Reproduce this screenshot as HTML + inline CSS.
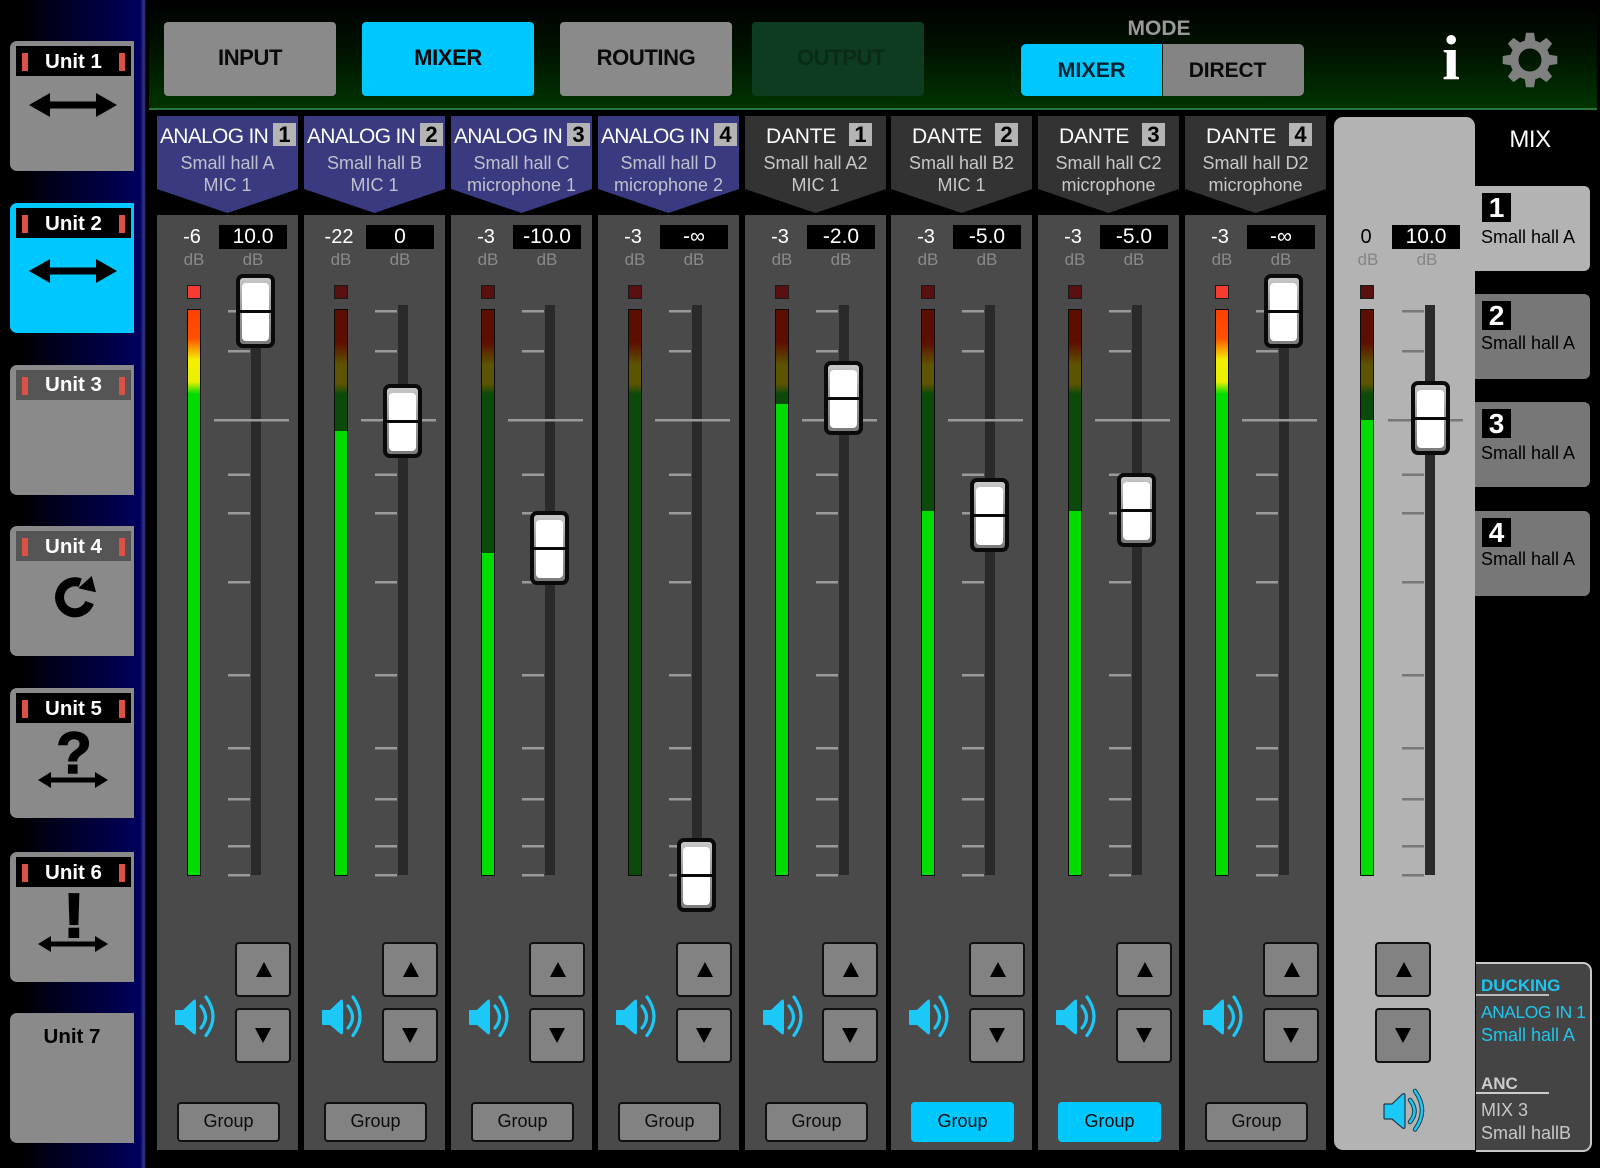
<!DOCTYPE html>
<html><head><meta charset="utf-8"><title>Mixer</title>
<style>
html,body{margin:0;padding:0;background:#000;width:1600px;height:1168px;overflow:hidden}
body{position:relative;font-family:"Liberation Sans",sans-serif}
div,span,svg{position:absolute;display:block}
.c{text-align:center;white-space:nowrap}
#side{left:0;top:0;width:146px;height:1168px;background:linear-gradient(90deg,#000 0,#000 20px,#00002a 70px,#000052 125px,#000060 140px,#34348c 144px,#20205a 145px,#000 146px)}
.u{left:10px;width:124px;height:130px;background:#8a8a8a;border-radius:7px 0 0 7px}
.u.on{background:#00c8ff}
.ub{left:6px;top:5px;width:115px;height:30px;background:#000}
.ub i{position:absolute;top:7px;width:6px;height:18px;background:#dc5045;display:block}
.ub i.a{left:6px}.ub i.z{left:103px}
.ut{left:0;width:115px;top:4px;line-height:24px;font-size:20.5px;font-weight:bold;color:#fff;text-align:center}
#top{left:149px;top:0;width:1448px;height:108px;background:linear-gradient(180deg,#000 0,#001200 45%,#003400 100%);border-bottom:2px solid #26743e}
.tb{top:22px;width:172px;height:74px;line-height:72px;border-radius:4px;background:#8a8a8a;text-align:center;font-size:22px;font-weight:bold;letter-spacing:-.4px;color:#0a0a0a}
.s{top:0;width:141px;height:1168px}
.h{left:0;top:116px;width:141px;height:97px;clip-path:polygon(0 0,100% 0,100% 73px,50% 100%,0 73px);background:#333}
.h.a{background:#3a3a80}
.ht{top:8px;line-height:26px;font-size:21px;color:#fff;white-space:nowrap;letter-spacing:-.7px}
.a .ht{left:3px}
.d .ht{left:21px;letter-spacing:-.2px}
.n{top:7px;width:23px;height:23px;line-height:24px;background:#b4b4b4;text-align:center;font-size:22px;font-weight:bold;color:#000}
.a .n{left:116px}.d .n{left:104px}
.l1,.l2{left:0;width:141px;text-align:center;font-size:18px;color:#c0c0cc;line-height:22px;white-space:nowrap}
.l1{top:36px}.l2{top:58px}
.d .l1,.d .l2{color:#c8c8c8}
.b{left:0;top:215px;width:141px;height:935px;background:#4a4a4a}
.lv{left:10px;width:50px;top:225px;line-height:24px;font-size:20px;color:#fff;text-align:center}
.vb{left:62px;top:225px;width:68px;height:24px;line-height:24px;background:#000;color:#fff;font-size:21px;text-align:center}
.db{top:250px;width:40px;line-height:20px;font-size:17px;color:#8a8a8a;text-align:center}
.led{left:30px;top:285px;width:12px;height:12px;border:1px solid #1a1a1a;background:#5a1010}
.led.on{background:#f63c30}
.m{left:30px;top:309px;width:12px;height:565px;border:1px solid #0c0c0c;background:linear-gradient(180deg,#5c0f00 0,#5c0f00 32px,#5c5400 55px,#5c5400 74px,#0b4a0b 84px,#0b4a0b 100%)}
.m b{position:absolute;display:block;left:0;top:0;width:12px;height:565px;background:linear-gradient(180deg,#ff4000 0,#ff5000 28px,#f4f000 50px,#e8f000 72px,#00dc00 84px,#00dc00 100%)}
.tr{left:94px;top:305px;width:10px;height:570px;background:#2a2a2a}
.tk{left:57px;top:0;color:#9a9a9a;overflow:visible}
.cap{left:79px;width:31px;height:66px;border:4px solid #0a0a0a;border-radius:7px;background:linear-gradient(180deg,#c8c8c8 0,#a0a0a0 40%,#7c7c7c 100%)}
.cap:before{content:"";position:absolute;left:2px;right:2px;top:5px;bottom:3px;background:#fff;border-radius:4px}
.cap:after{content:"";position:absolute;left:0;right:0;top:32px;height:3px;background:#0a0a0a}
.ud{left:78px;width:52px;height:51px;background:#828282;border:2px solid #111;border-radius:4px}
.up{top:942px}.dn{top:1008px}
.ud svg{left:0;top:0}
.sp{left:18px;top:998px;overflow:visible}
.g{left:20px;top:1102px;width:99px;height:36px;line-height:35px;border:2px solid #111;border-radius:4px;background:#828282;text-align:center;font-size:18px;color:#0c0c0c}
.g.on{background:#00c8ff;border-color:#00c8ff}
.mt{left:1475px;width:115px;height:85px;background:#777;border-radius:0 6px 6px 0}
.mt.on{background:#b3b3b3}
.mn{left:7px;top:7px;width:29px;height:29px;line-height:30px;background:#000;color:#fff;font-weight:bold;font-size:28px;text-align:center}
.ml{left:6px;top:40px;font-size:18px;line-height:22px;color:#000;white-space:nowrap}
#duck div{left:5px;white-space:nowrap;font-size:18px;line-height:22px}
</style></head>
<body>
<svg width="0" height="0" style="left:0;top:0"><defs>
<g id="ticks" fill="currentColor">
<rect x="14" y="310" width="22" height="2.5"/><rect x="14" y="350" width="22" height="2.5"/><rect x="0" y="419" width="75" height="2.5"/><rect x="14" y="473.500" width="22" height="2.500"/><rect x="14" y="512" width="22" height="2.500"/><rect x="14" y="581" width="22" height="2.500"/><rect x="14" y="674" width="22" height="2.500"/><rect x="14" y="747" width="22" height="2.500"/><rect x="14" y="798" width="22" height="2.500"/><rect x="14" y="845" width="22" height="2.500"/><rect x="14" y="874" width="22" height="2.500"/>
</g>
<g id="spk"><path d="M1 12H8L18 2.500Q21 0 21 4V34Q21 38 18 35.500L8 27H1Q0 27 0 26V13Q0 12 1 12Z" fill="#1cc8f6"/><path d="M26 8Q35 19.500 26 30M31 -1Q45 18.500 31 37.500" fill="none" stroke="#1cc8f6" stroke-width="3.200" stroke-linecap="round"/></g>
<g id="arw"><path d="M0 12L21 0V8.500H67V0L88 12L67 24V15.500H21V24Z" fill="#000"/></g>
<g id="arws"><path d="M0 8L13 0V5.500H57V0L70 8L57 16V10.500H13V16Z" fill="#000"/></g>
<g id="tu"><path d="M8 0L16 15H0Z" fill="#000"/></g>
<g id="td"><path d="M0 0H16L8 15Z" fill="#000"/></g>
</defs></svg>

<div id="side"></div>
<div class="u" style="top:41px"><div class="ub"><i class="a"></i><i class="z"></i><div class="ut">Unit 1</div></div><svg style="left:19px;top:52px" width="88" height="24"><use href="#arw"/></svg></div>
<div class="u on" style="top:203px"><div class="ub"><i class="a"></i><i class="z"></i><div class="ut">Unit 2</div></div><svg style="left:19px;top:56px" width="88" height="24"><use href="#arw"/></svg></div>
<div class="u" style="top:365px"><div class="ub" style="background:#555"><i class="a"></i><i class="z"></i><div class="ut" style="top:3px">Unit 3</div></div></div>
<div class="u" style="top:526px"><div class="ub" style="background:#555"><i class="a"></i><i class="z"></i><div class="ut">Unit 4</div></div><svg style="left:40px;top:40px" width="60" height="60" viewBox="50 566 60 60"><path d="M89.600 602.600A15.500 15.500 0 1 1 80.300 582.700" fill="none" stroke="#000" stroke-width="9"/><path d="M91.700 576L96 592.300L78.300 588.300Z" fill="#000"/></svg></div>
<div class="u" style="top:688px"><div class="ub"><i class="a"></i><i class="z"></i><div class="ut">Unit 5</div></div><div class="c" style="left:24px;width:80px;top:36px;line-height:60px;font-size:58px;font-weight:bold;color:#000;-webkit-text-stroke:1.5px #000">?</div><svg style="left:28px;top:84px" width="70" height="16"><use href="#arws"/></svg></div>
<div class="u" style="top:852px"><div class="ub"><i class="a"></i><i class="z"></i><div class="ut">Unit 6</div></div><div class="c" style="left:24px;width:80px;top:35px;line-height:60px;font-size:62px;font-weight:bold;color:#000;-webkit-text-stroke:2px #000">!</div><svg style="left:28px;top:84px" width="70" height="16"><use href="#arws"/></svg></div>
<div class="u" style="top:1013px"><div class="ut" style="top:12px;width:124px;color:#000">Unit 7</div></div>

<div id="top"></div>
<div class="tb" style="left:164px">INPUT</div>
<div class="tb" style="left:362px;background:#00c8ff">MIXER</div>
<div class="tb" style="left:560px">ROUTING</div>
<div class="tb" style="left:752px;width:166px;padding-left:6px;background:#0d3c20;color:#0a2c14">OUTPUT</div>
<div class="c" style="left:1100px;width:118px;top:16px;line-height:25px;font-size:21px;font-weight:bold;color:#999">MODE</div>
<div class="c" style="left:1021px;top:44px;width:141px;height:52px;line-height:53px;background:#00c8ff;border-radius:5px 0 0 5px;font-size:21.500px;font-weight:bold;color:#03222e">MIXER</div>
<div class="c" style="left:1163px;top:44px;width:129px;padding-right:12px;height:52px;line-height:53px;background:#848484;border-radius:0 5px 5px 0;font-size:21px;font-weight:bold;color:#0a0a0a;letter-spacing:-.1px">DIRECT</div>
<div class="c" style="left:1421px;width:60px;top:22px;line-height:72px;font-family:'Liberation Serif',serif;font-size:64px;font-weight:bold;color:#fff">i</div>
<svg style="left:1500px;top:30px" width="60" height="60" viewBox="-30 -30 60 60"><circle r="15.750" fill="none" stroke="#808080" stroke-width="8.500"/><g fill="#808080"><path d="M-4 -27.300H4L5.500 -18H-5.500Z"/><path d="M-4 -27.300H4L5.500 -18H-5.500Z" transform="rotate(45)"/><path d="M-4 -27.300H4L5.500 -18H-5.500Z" transform="rotate(90)"/><path d="M-4 -27.300H4L5.500 -18H-5.500Z" transform="rotate(135)"/><path d="M-4 -27.300H4L5.500 -18H-5.500Z" transform="rotate(180)"/><path d="M-4 -27.300H4L5.500 -18H-5.500Z" transform="rotate(225)"/><path d="M-4 -27.300H4L5.500 -18H-5.500Z" transform="rotate(270)"/><path d="M-4 -27.300H4L5.500 -18H-5.500Z" transform="rotate(315)"/></g></svg>

<div class="s" style="left:157px"><div class="h a"><div class="ht">ANALOG IN</div><div class="n">1</div><div class="l1">Small hall A</div><div class="l2">MIC 1</div></div><div class="b"></div><div class="lv">-6</div><div class="vb">10.0</div><div class="db" style="left:17px">dB</div><div class="db" style="left:76px">dB</div><div class="led on"></div><div class="m"><b style="clip-path:inset(0 0 0 0)"></b></div><div class="tr"></div><svg class="tk" width="76" height="900"><use href="#ticks"/></svg><div class="cap" style="top:274px"></div><div class="ud up"><svg width="52" height="51"><use href="#tu" x="19" y="18"/></svg></div><div class="ud dn"><svg width="52" height="51"><use href="#td" x="18" y="18"/></svg></div><svg class="sp" width="44" height="40"><use href="#spk"/></svg><div class="g">Group</div></div>

<div class="s" style="left:304px"><div class="h a"><div class="ht">ANALOG IN</div><div class="n">2</div><div class="l1">Small hall B</div><div class="l2">MIC 1</div></div><div class="b"></div><div class="lv">-22</div><div class="vb">0</div><div class="db" style="left:17px">dB</div><div class="db" style="left:76px">dB</div><div class="led"></div><div class="m"><b style="clip-path:inset(121px 0 0 0)"></b></div><div class="tr"></div><svg class="tk" width="76" height="900"><use href="#ticks"/></svg><div class="cap" style="top:384px"></div><div class="ud up"><svg width="52" height="51"><use href="#tu" x="19" y="18"/></svg></div><div class="ud dn"><svg width="52" height="51"><use href="#td" x="18" y="18"/></svg></div><svg class="sp" width="44" height="40"><use href="#spk"/></svg><div class="g">Group</div></div>

<div class="s" style="left:451px"><div class="h a"><div class="ht">ANALOG IN</div><div class="n">3</div><div class="l1">Small hall C</div><div class="l2">microphone 1</div></div><div class="b"></div><div class="lv">-3</div><div class="vb">-10.0</div><div class="db" style="left:17px">dB</div><div class="db" style="left:76px">dB</div><div class="led"></div><div class="m"><b style="clip-path:inset(243px 0 0 0)"></b></div><div class="tr"></div><svg class="tk" width="76" height="900"><use href="#ticks"/></svg><div class="cap" style="top:511px"></div><div class="ud up"><svg width="52" height="51"><use href="#tu" x="19" y="18"/></svg></div><div class="ud dn"><svg width="52" height="51"><use href="#td" x="18" y="18"/></svg></div><svg class="sp" width="44" height="40"><use href="#spk"/></svg><div class="g">Group</div></div>

<div class="s" style="left:598px"><div class="h a"><div class="ht">ANALOG IN</div><div class="n">4</div><div class="l1">Small hall D</div><div class="l2">microphone 2</div></div><div class="b"></div><div class="lv">-3</div><div class="vb">-∞</div><div class="db" style="left:17px">dB</div><div class="db" style="left:76px">dB</div><div class="led"></div><div class="m"></div><div class="tr"></div><svg class="tk" width="76" height="900"><use href="#ticks"/></svg><div class="cap" style="top:838px"></div><div class="ud up"><svg width="52" height="51"><use href="#tu" x="19" y="18"/></svg></div><div class="ud dn"><svg width="52" height="51"><use href="#td" x="18" y="18"/></svg></div><svg class="sp" width="44" height="40"><use href="#spk"/></svg><div class="g">Group</div></div>

<div class="s" style="left:745px"><div class="h d"><div class="ht">DANTE</div><div class="n">1</div><div class="l1">Small hall A2</div><div class="l2">MIC 1</div></div><div class="b"></div><div class="lv">-3</div><div class="vb">-2.0</div><div class="db" style="left:17px">dB</div><div class="db" style="left:76px">dB</div><div class="led"></div><div class="m"><b style="clip-path:inset(94px 0 0 0)"></b></div><div class="tr"></div><svg class="tk" width="76" height="900"><use href="#ticks"/></svg><div class="cap" style="top:361px"></div><div class="ud up" style="left:77px"><svg width="52" height="51"><use href="#tu" x="19" y="18"/></svg></div><div class="ud dn" style="left:77px"><svg width="52" height="51"><use href="#td" x="18" y="18"/></svg></div><svg class="sp" width="44" height="40"><use href="#spk"/></svg><div class="g">Group</div></div>

<div class="s" style="left:891px"><div class="h d"><div class="ht">DANTE</div><div class="n">2</div><div class="l1">Small hall B2</div><div class="l2">MIC 1</div></div><div class="b"></div><div class="lv">-3</div><div class="vb">-5.0</div><div class="db" style="left:17px">dB</div><div class="db" style="left:76px">dB</div><div class="led"></div><div class="m"><b style="clip-path:inset(201px 0 0 0)"></b></div><div class="tr"></div><svg class="tk" width="76" height="900"><use href="#ticks"/></svg><div class="cap" style="top:478px"></div><div class="ud up"><svg width="52" height="51"><use href="#tu" x="19" y="18"/></svg></div><div class="ud dn"><svg width="52" height="51"><use href="#td" x="18" y="18"/></svg></div><svg class="sp" width="44" height="40"><use href="#spk"/></svg><div class="g on">Group</div></div>

<div class="s" style="left:1038px"><div class="h d"><div class="ht">DANTE</div><div class="n">3</div><div class="l1">Small hall C2</div><div class="l2">microphone</div></div><div class="b"></div><div class="lv">-3</div><div class="vb">-5.0</div><div class="db" style="left:17px">dB</div><div class="db" style="left:76px">dB</div><div class="led"></div><div class="m"><b style="clip-path:inset(201px 0 0 0)"></b></div><div class="tr"></div><svg class="tk" width="76" height="900"><use href="#ticks"/></svg><div class="cap" style="top:473px"></div><div class="ud up"><svg width="52" height="51"><use href="#tu" x="19" y="18"/></svg></div><div class="ud dn"><svg width="52" height="51"><use href="#td" x="18" y="18"/></svg></div><svg class="sp" width="44" height="40"><use href="#spk"/></svg><div class="g on">Group</div></div>

<div class="s" style="left:1185px"><div class="h d"><div class="ht">DANTE</div><div class="n">4</div><div class="l1">Small hall D2</div><div class="l2">microphone</div></div><div class="b"></div><div class="lv">-3</div><div class="vb">-∞</div><div class="db" style="left:17px">dB</div><div class="db" style="left:76px">dB</div><div class="led on"></div><div class="m"><b style="clip-path:inset(0 0 0 0)"></b></div><div class="tr"></div><svg class="tk" width="76" height="900"><use href="#ticks"/></svg><div class="cap" style="top:274px"></div><div class="ud up"><svg width="52" height="51"><use href="#tu" x="19" y="18"/></svg></div><div class="ud dn"><svg width="52" height="51"><use href="#td" x="18" y="18"/></svg></div><svg class="sp" width="44" height="40"><use href="#spk"/></svg><div class="g">Group</div></div>

<div class="c" style="left:1475px;width:110px;top:126px;line-height:28px;font-size:24px;color:#fff;letter-spacing:-.5px">MIX</div>
<div class="mt on" style="top:186px"><div class="mn">1</div><div class="ml" style="top:40px">Small hall A</div></div>
<div class="mt" style="top:294px"><div class="mn">2</div><div class="ml" style="top:38px">Small hall A</div></div>
<div class="mt" style="top:402px"><div class="mn">3</div><div class="ml" style="top:40px">Small hall A</div></div>
<div class="mt" style="top:511px"><div class="mn">4</div><div class="ml" style="top:37px">Small hall A</div></div>

<div class="s" style="left:1334px;width:141px"><div style="left:0;top:117px;width:141px;height:1033px;background:#b3b3b3;border-radius:9px 9px 0 9px"></div><div class="lv" style="left:7px;color:#000">0</div><div class="vb" style="left:58px">10.0</div><div class="db" style="left:14px;color:#858585">dB</div><div class="db" style="left:73px;color:#858585">dB</div><div class="led" style="left:26px"></div><div class="m" style="left:26px"><b style="clip-path:inset(110px 0 0 0)"></b></div><div class="tr" style="left:91px"></div><svg class="tk" style="left:54px;color:#777" width="76" height="900"><use href="#ticks"/></svg><div class="cap" style="left:77px;top:381px"></div><div class="ud up" style="left:41px"><svg width="52" height="51"><use href="#tu" x="19" y="18"/></svg></div><div class="ud dn" style="left:41px"><svg width="52" height="51"><use href="#td" x="18" y="18"/></svg></div><svg style="left:50px;top:1092px;overflow:visible" width="44" height="42"><path d="M1 12H8L18 2.500Q21 0 21 4V34Q21 38 18 35.500L8 27H1Q0 27 0 26V13Q0 12 1 12Z" fill="#1cc8f6" stroke="#1d3a4a" stroke-width="1.200"/><path d="M26 8Q35 19.500 26 30M31 -1Q45 18.500 31 37.500" fill="none" stroke="#1d3a4a" stroke-width="4.500" stroke-linecap="round"/><path d="M26 8Q35 19.500 26 30M31 -1Q45 18.500 31 37.500" fill="none" stroke="#1cc8f6" stroke-width="2.500" stroke-linecap="round"/></svg></div>

<div id="duck" style="left:1476px;top:962px;width:114px;height:186px;background:#444;border:2px solid #c8c8c8;border-left:0;border-radius:0 9px 9px 0">
<div style="top:11px;font-weight:bold;font-size:17px;color:#1fc4ee">DUCKING</div>
<div style="left:0;top:30px;width:73px;height:1.500px;background:#bbb"></div>
<div style="top:37px;color:#1fc4ee;font-size:17.500px;letter-spacing:-.5px">ANALOG IN 1</div>
<div style="top:60px;color:#1fc4ee">Small hall A</div>
<div style="top:109px;font-weight:bold;font-size:17px;color:#ccc">ANC</div>
<div style="left:0;top:128px;width:73px;height:1.500px;background:#ccc"></div>
<div style="top:135px;color:#c8c8c8">MIX 3</div>
<div style="top:158px;color:#c8c8c8">Small hallB</div>
</div>
</body></html>
